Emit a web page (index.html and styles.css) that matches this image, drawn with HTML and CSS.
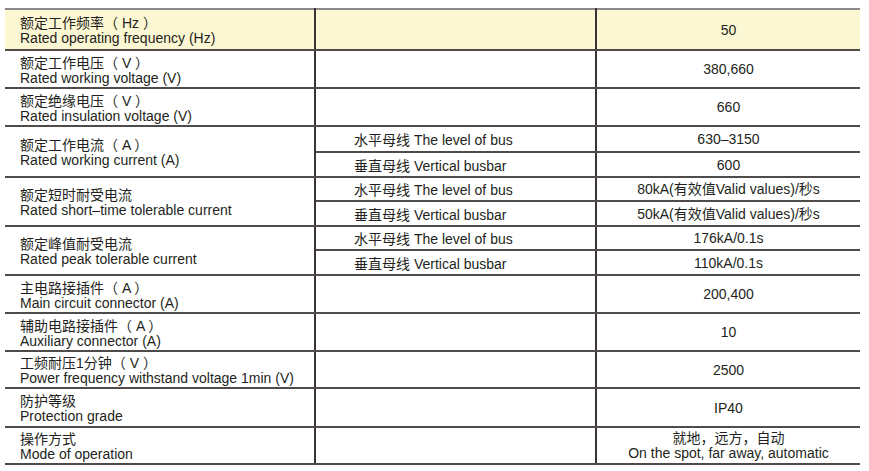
FILE: index.html
```html
<!DOCTYPE html>
<html lang="zh">
<head>
<meta charset="utf-8">
<title>Technical parameters</title>
<link rel="stylesheet" href="styles.css">
</head>
<body>
<div class="wrap">
<table class="spec">
  <colgroup><col class="c1"><col class="c2"><col class="c3"></colgroup>
  <tbody>
    <tr class="h41 hl">
      <td class="name">额定工作频率（ Hz ）<br>Rated operating frequency (Hz)</td>
      <td></td>
      <td class="val">50</td>
    </tr>
    <tr class="h38">
      <td class="name">额定工作电压（ V ）<br>Rated working voltage (V)</td>
      <td></td>
      <td class="val">380,660</td>
    </tr>
    <tr class="h38">
      <td class="name">额定绝缘电压（ V ）<br>Rated insulation voltage (V)</td>
      <td></td>
      <td class="val">660</td>
    </tr>
    <tr class="h26">
      <td class="name" rowspan="2">额定工作电流（ A ）<br>Rated working current (A)</td>
      <td class="sub">水平母线 The level of bus</td>
      <td class="val">630–3150</td>
    </tr>
    <tr class="h25">
      <td class="sub">垂直母线 Vertical busbar</td>
      <td class="val">600</td>
    </tr>
    <tr class="h24">
      <td class="name" rowspan="2">额定短时耐受电流<br>Rated short–time tolerable current</td>
      <td class="sub">水平母线 The level of bus</td>
      <td class="val">80kA(有效值Valid values)/秒s</td>
    </tr>
    <tr class="h25">
      <td class="sub">垂直母线 Vertical busbar</td>
      <td class="val">50kA(有效值Valid values)/秒s</td>
    </tr>
    <tr class="h24">
      <td class="name" rowspan="2">额定峰值耐受电流<br>Rated peak tolerable current</td>
      <td class="sub">水平母线 The level of bus</td>
      <td class="val">176kA/0.1s</td>
    </tr>
    <tr class="h25">
      <td class="sub">垂直母线 Vertical busbar</td>
      <td class="val">110kA/0.1s</td>
    </tr>
    <tr class="h38">
      <td class="name">主电路接插件（ A ）<br>Main circuit connector (A)</td>
      <td></td>
      <td class="val">200,400</td>
    </tr>
    <tr class="h38">
      <td class="name">辅助电路接插件（ A ）<br>Auxiliary connector (A)</td>
      <td></td>
      <td class="val">10</td>
    </tr>
    <tr class="h37">
      <td class="name">工频耐压1分钟（ V ）<br>Power frequency withstand voltage 1min (V)</td>
      <td></td>
      <td class="val">2500</td>
    </tr>
    <tr class="h39">
      <td class="name">防护等级<br>Protection grade</td>
      <td></td>
      <td class="val">IP40</td>
    </tr>
    <tr class="h37">
      <td class="name">操作方式<br>Mode of operation</td>
      <td></td>
      <td class="val">就地，远方，自动<br>On the spot, far away, automatic</td>
    </tr>
  </tbody>
</table>
</div>
</body>
</html>
```

FILE: styles.css
```css
html, body {
  margin: 0;
  padding: 0;
  background: #ffffff;
}

.wrap {
  padding: 8px 9px 0 5px;
}

.spec {
  width: 855px;
  border-collapse: collapse;
  table-layout: fixed;
  font-family: "Liberation Sans", "Noto Sans CJK SC", sans-serif;
  font-size: 14px;
  line-height: 15px;
  color: #231f20;
}

.c1 { width: 310px; }
.c2 { width: 281px; }
.c3 { width: 264px; }

.spec td {
  padding: 0;
  border-top: 2px solid #4f4b4b;
  border-bottom: 2px solid #4f4b4b;
  border-left: 2px solid #3a3434;
  border-right: 2px solid #3a3434;
  vertical-align: middle;
  white-space: nowrap;
}

.spec td:first-child { border-left: none; }
.spec td:last-child { border-right: none; }

.spec tr:first-child td { border-top: 2px solid #8a8888; }

.spec .name {
  padding-top: 3px;
  padding-left: 15px;
  text-align: left;
}

.spec .sub {
  padding-top: 3px;
  padding-left: 38px;
  text-align: left;
}

.spec .val {
  padding-top: 1px;
  text-align: center;
}

.hl td { background: #fcf7d3; }

.h41 { height: 41px; }
.h39 { height: 39px; }
.h38 { height: 38px; }
.h37 { height: 37px; }
.h26 { height: 26px; }
.h25 { height: 25px; }
.h24 { height: 24px; }
```
